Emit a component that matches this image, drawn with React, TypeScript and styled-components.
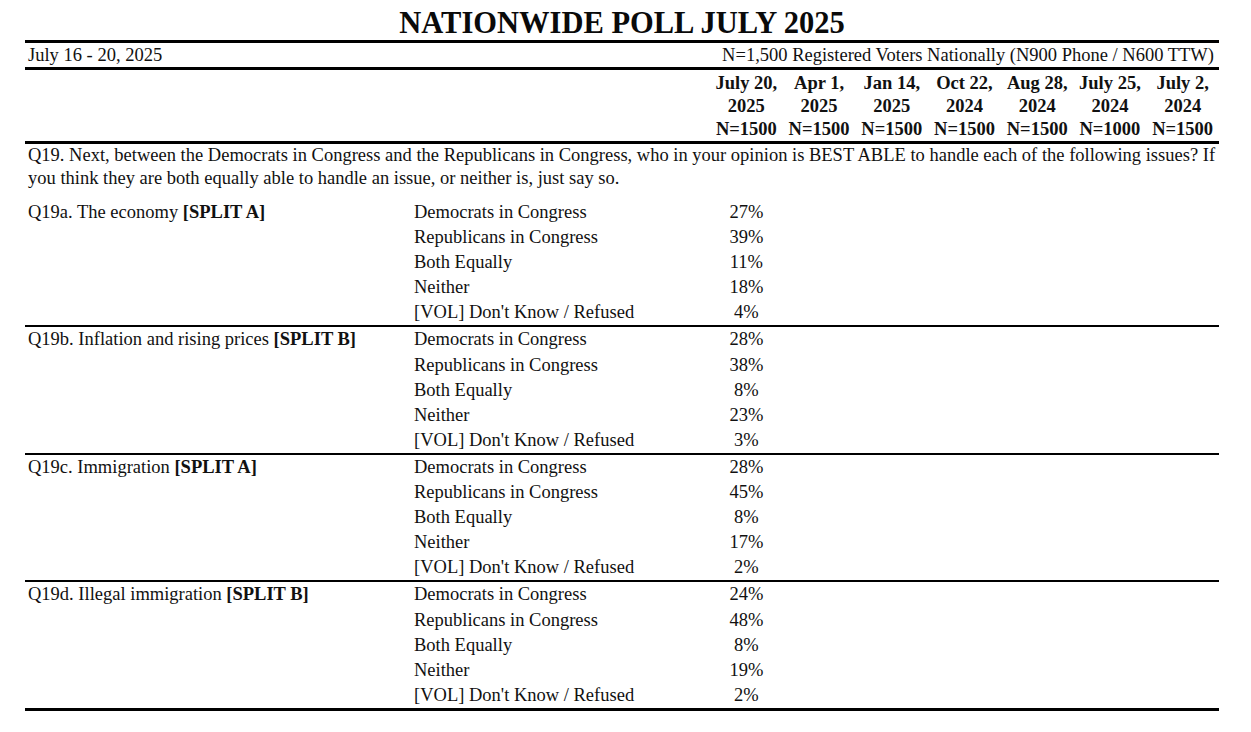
import React from "react";
import styled, { createGlobalStyle } from "styled-components";

const GlobalStyle = createGlobalStyle`
  html, body { margin: 0; padding: 0; background: #ffffff; }
  body { font-family: "Liberation Serif", "Times New Roman", serif; color: #111111; }
`;

const COLS = "386px 299px repeat(7, 1fr)";

const Page = styled.div`
  width: 1194px;
  margin-left: 25px;
  font-size: 18.5px;
  font-family: "Liberation Serif", "Times New Roman", serif;
  color: #111111;
`;

const Title = styled.h1`
  margin: 0;
  padding-top: 6px;
  height: 34px;
  line-height: 34px;
  font-size: 30.5px;
  font-weight: 700;
  text-align: center;
  color: #0a0a0a;
`;

const DateRow = styled.div`
  border-top: 3px solid #000;
  display: flex;
  justify-content: space-between;
  height: 24px;
  line-height: 24px;
  padding: 0 5px 0 3px;
`;

const HeaderRow = styled.div`
  border-top: 3px solid #000;
  display: grid;
  grid-template-columns: ${COLS};
  padding: 2px 0 0;
`;

const HeaderCell = styled.div<{ $col: number }>`
  grid-column: ${(p) => p.$col};
  text-align: center;
  font-weight: 700;
  line-height: 23px;
  white-space: nowrap;
`;

const HeaderLine = styled.div`
  display: block;
`;

const Question = styled.div`
  border-top: 3px solid #000;
  padding: 0 0 10px 3px;
  line-height: 23px;
`;

const QuestionLine = styled.div`
  white-space: nowrap;
`;

const Blocks = styled.div`
  border-bottom: 3px solid #000;
`;

const Block = styled.div<{ $first?: boolean }>`
  display: grid;
  grid-template-columns: ${COLS};
  grid-auto-rows: 25.1px;
  line-height: 25.1px;
  border-top: ${(p) => (p.$first ? "none" : "2px solid #000")};
`;

const Label = styled.div`
  grid-column: 1;
  grid-row: 1;
  padding-left: 3px;
  white-space: nowrap;
`;

const Option = styled.div<{ $row: number }>`
  grid-column: 2;
  grid-row: ${(p) => p.$row};
  padding-left: 3px;
  white-space: nowrap;
`;

const Value = styled.div<{ $row: number }>`
  grid-column: 3;
  grid-row: ${(p) => p.$row};
  text-align: center;
`;

const headers = [
  ["July 20,", "2025", "N=1500"],
  ["Apr 1,", "2025", "N=1500"],
  ["Jan 14,", "2025", "N=1500"],
  ["Oct 22,", "2024", "N=1500"],
  ["Aug 28,", "2024", "N=1500"],
  ["July 25,", "2024", "N=1000"],
  ["July 2,", "2024", "N=1500"],
];

const options = [
  "Democrats in Congress",
  "Republicans in Congress",
  "Both Equally",
  "Neither",
  "[VOL] Don't Know / Refused",
];

const questions = [
  { label: "Q19a. The economy", split: "[SPLIT A]", values: [27, 39, 11, 18, 4] },
  { label: "Q19b. Inflation and rising prices", split: "[SPLIT B]", values: [28, 38, 8, 23, 3] },
  { label: "Q19c. Immigration", split: "[SPLIT A]", values: [28, 45, 8, 17, 2] },
  { label: "Q19d. Illegal immigration", split: "[SPLIT B]", values: [24, 48, 8, 19, 2] },
];

export default function App() {
  return (
    <>
      <GlobalStyle />
      <Page>
        <Title>NATIONWIDE POLL JULY 2025</Title>
        <DateRow>
          <span>July 16 - 20, 2025</span>
          <span>N=1,500 Registered Voters Nationally (N900 Phone / N600 TTW)</span>
        </DateRow>
        <HeaderRow>
          {headers.map((h, i) => (
            <HeaderCell key={i} $col={i + 3}>
              {h.map((line, j) => (
                <HeaderLine key={j}>{line}</HeaderLine>
              ))}
            </HeaderCell>
          ))}
        </HeaderRow>
        <Question>
          <QuestionLine>
            Q19. Next, between the Democrats in Congress and the Republicans in Congress, who in your opinion is BEST ABLE to handle each of the following issues? If
          </QuestionLine>
          <QuestionLine>
            you think they are both equally able to handle an issue, or neither is, just say so.
          </QuestionLine>
        </Question>
        <Blocks>
          {questions.map((q, qi) => (
            <Block key={qi} $first={qi === 0}>
              <Label>
                {q.label} <b>{q.split}</b>
              </Label>
              {options.map((o, oi) => (
                <React.Fragment key={oi}>
                  <Option $row={oi + 1}>{o}</Option>
                  <Value $row={oi + 1}>{q.values[oi]}%</Value>
                </React.Fragment>
              ))}
            </Block>
          ))}
        </Blocks>
      </Page>
    </>
  );
}
